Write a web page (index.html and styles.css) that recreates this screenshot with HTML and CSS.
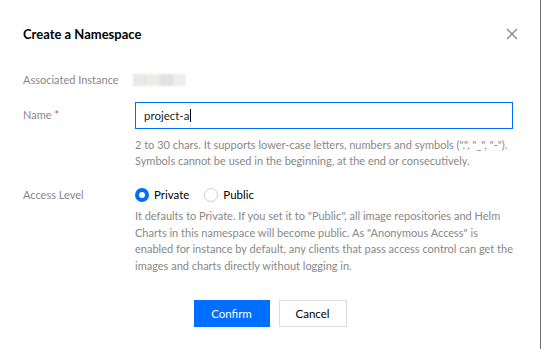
FILE: index.html
```html
<!DOCTYPE html>
<html lang="en">
<head>
  <meta charset="UTF-8">
  <title>Create a Namespace</title>
  <link rel="stylesheet" href="styles.css">
</head>
<body>
  <div class="dialog">
    <header class="dialog-header">
      <h1>Create a Namespace</h1>
      <button class="close" aria-label="Close">
        <svg width="12" height="12" viewBox="0 0 12 12"><path d="M1 1L11 11M11 1L1 11" stroke="#888" stroke-width="1.3" fill="none"/></svg>
      </button>
    </header>

    <div class="form">
      <div class="form-row row-instance">
        <div class="form-label">Associated Instance</div>
        <div class="form-control">
          <div class="masked">
            <span></span><span></span><span></span><span></span>
          </div>
        </div>
      </div>

      <div class="form-row row-name">
        <div class="form-label">Name <span class="required">*</span></div>
        <div class="form-control">
          <div class="input">project-a<span class="caret"></span></div>
          <p class="help">2 to 30 chars. It supports lower-case letters, numbers and symbols (".", "_", "-").<br>Symbols cannot be used in the beginning, at the end or consecutively.</p>
        </div>
      </div>

      <div class="form-row row-access">
        <div class="form-label">Access Level</div>
        <div class="form-control">
          <div class="radios">
            <label class="radio checked"><span class="dot"></span>Private</label>
            <label class="radio"><span class="dot"></span>Public</label>
          </div>
          <p class="help">It defaults to Private. If you set it to "Public", all image repositories and Helm<br>Charts in this namespace will become public. As "Anonymous Access" is<br>enabled for instance by default, any clients that pass access control can get the<br>images and charts directly without logging in.</p>
        </div>
      </div>
    </div>

    <div class="actions">
      <button class="button primary">Confirm</button>
      <button class="button">Cancel</button>
    </div>
  </div>
</body>
</html>
```

FILE: styles.css
```css
:root {
  --primary: #006eff;
  --text: #000000;
  --muted: #888888;
  --border: #dddddd;
}

* {
  box-sizing: border-box;
}

body {
  margin: 0;
  font-family: Lato, "Noto Sans", sans-serif;
  font-size: 11px;
  line-height: 16.5px;
  color: var(--text);
  background: #ffffff;
}

.dialog {
  height: 349px;
  padding: 24px 23px 0 23px;
  border-right: 1px solid #707070;
}

.dialog-header {
  display: flex;
  justify-content: space-between;
  align-items: center;
  height: 20px;
}

.dialog-header h1 {
  margin: 0;
  font-size: 13px;
  font-weight: 700;
  line-height: 20px;
}

.close {
  display: flex;
  padding: 0;
  margin-right: -1px;
  border: none;
  background: none;
}

.form {
  margin-top: 27px;
}

.form-row {
  display: flex;
}

.form-label {
  width: 112px;
  flex-shrink: 0;
  color: var(--muted);
}

.form-control {
  width: 378px;
}

.row-instance {
  height: 18px;
  align-items: center;
}

.masked {
  display: flex;
  width: 53px;
  height: 12px;
  margin-left: -2px;
  filter: blur(1px);
  opacity: 0.85;
}

.masked span {
  flex: 1;
}

.masked span:nth-child(1) { background: #e4e4e4; }
.masked span:nth-child(2) { background: #ebe8e3; }
.masked span:nth-child(3) { background: #dcdcdc; }
.masked span:nth-child(4) { background: #e8eaed; }

.row-name {
  margin-top: 13px;
}

.row-name .form-label {
  line-height: 26px;
}

.required {
  color: #e54545;
}

.input {
  height: 27px;
  padding: 0 8px;
  border: 1px solid var(--primary);
  line-height: 25px;
  font-size: 11.5px;
  color: #222;
}

.caret {
  display: inline-block;
  width: 1px;
  height: 13px;
  margin-left: 1px;
  vertical-align: -2px;
  background: #000;
}

.help {
  margin: 8px 0 0;
  color: var(--muted);
  white-space: nowrap;
}

.row-name .help {
  line-height: 16px;
}

.row-access {
  margin-top: 17px;
}

.row-access .form-label {
  line-height: 18px;
}

.radios {
  display: flex;
  gap: 15px;
  height: 18px;
  align-items: center;
}

.radio {
  display: flex;
  align-items: center;
  gap: 5px;
  font-size: 11.5px;
}

.dot {
  width: 14px;
  height: 14px;
  border-radius: 50%;
  border: 1px solid #cfcfcf;
  background: #fff;
}

.radio.checked .dot {
  border: 4px solid var(--primary);
}

.row-access .help {
  margin-top: 4px;
}

.actions {
  display: flex;
  justify-content: center;
  gap: 9px;
  margin-top: 26px;
}

.button {
  height: 27px;
  padding: 0;
  border: 1px solid var(--border);
  background: #fff;
  font-family: inherit;
  font-size: 11.5px;
  color: var(--text);
}

.button.primary {
  width: 76px;
  border-color: var(--primary);
  background: var(--primary);
  color: #fff;
}

.button:not(.primary) {
  width: 68px;
}
```
